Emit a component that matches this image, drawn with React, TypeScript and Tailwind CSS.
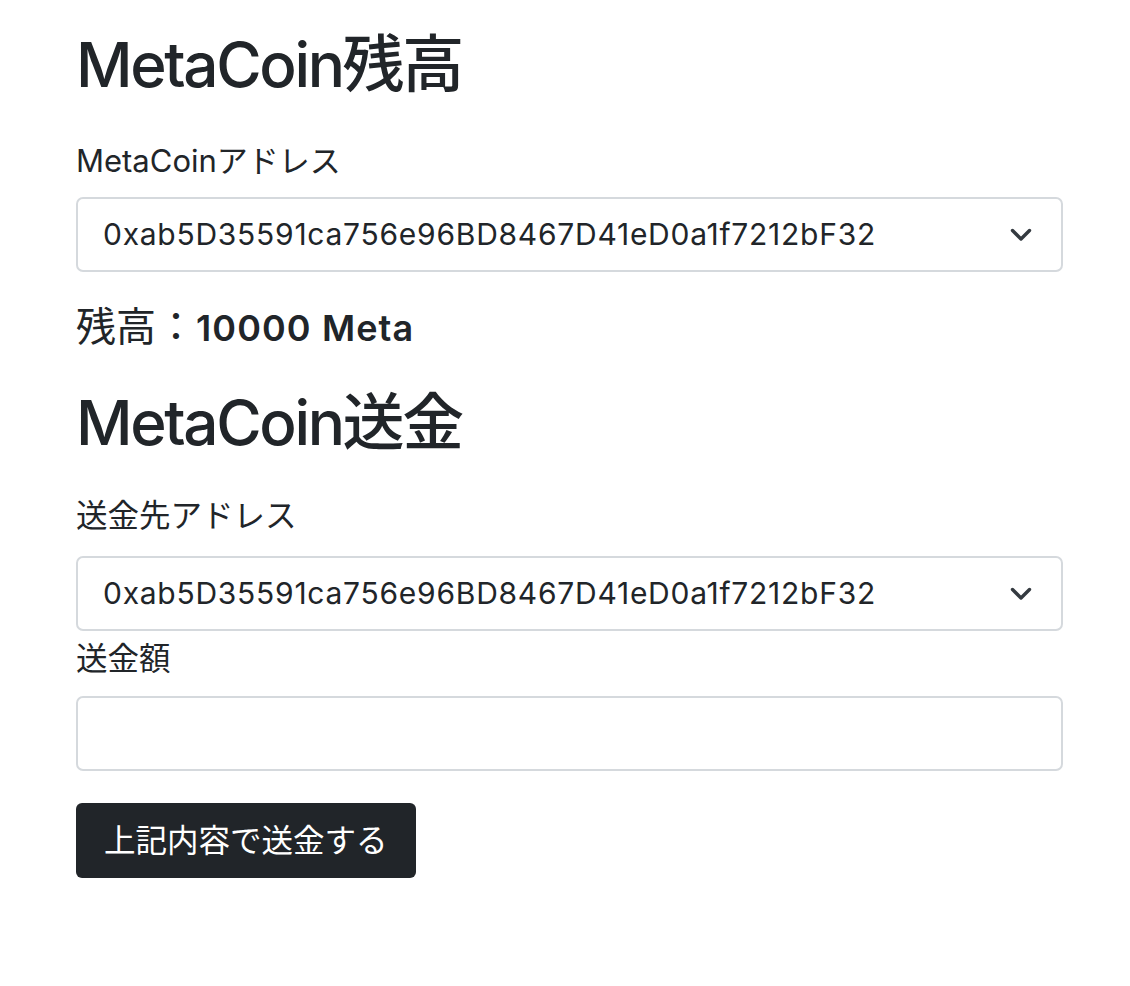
import { useState } from 'react'

const ADDRESS = '0xab5D35591ca756e96BD8467D41eD0a1f7212bF32'

function Chevron() {
  return (
    <svg width="22" height="14" viewBox="0 0 22 14" fill="none">
      <polyline
        points="2.5,2.5 11,11 19.5,2.5"
        stroke="#343a40"
        strokeWidth="3.4"
        strokeLinecap="round"
        strokeLinejoin="round"
      />
    </svg>
  )
}

function AddressSelect({ value }: { value: string }) {
  return (
    <div className="flex h-[75px] w-full items-center justify-between rounded-[7px] border-2 border-[#d5d9dd] bg-white pl-[25px] pr-[29px]">
      <span className="text-[30px] leading-[45px] tracking-[0.74px] text-[#212529]">{value}</span>
      <Chevron />
    </div>
  )
}

export default function App() {
  const [amount, setAmount] = useState('')

  return (
    <div
      className="min-h-[986px] w-full bg-white text-[#212529]"
      style={{ fontFamily: 'Inter, "Noto Sans CJK JP", sans-serif' }}
    >
      <div className="ml-[76px] flex w-[987px] flex-col">
        <h2 className="mt-[28px] text-[62px] font-medium leading-[74px] tracking-[-0.038em]">
          MetaCoin残高
        </h2>

        <label className="mt-[36px] text-[31px] leading-[45px]">MetaCoinアドレス</label>
        <div className="mt-[14px]">
          <AddressSelect value={ADDRESS} />
        </div>

        <div className="mt-[31px] text-[40px] leading-[48px]">
          <span className="leading-[40px]">残高：</span>
          <span className="text-[36px] font-semibold leading-[40px] tracking-[1.1px]">10000 Meta</span>
        </div>

        <h2 className="mt-[35px] text-[62px] font-medium leading-[74px] tracking-[-0.038em]">
          MetaCoin送金
        </h2>

        <label className="mt-[33px] text-[31.5px] leading-[45px]">送金先アドレス</label>
        <div className="mt-[18px]">
          <AddressSelect value={ADDRESS} />
        </div>

        <label className="mt-[5px] text-[31.5px] leading-[45px]">送金額</label>
        <input
          value={amount}
          onChange={(e) => setAmount(e.target.value)}
          className="mt-[15px] h-[75px] w-full rounded-[7px] border-2 border-[#d5d9dd] bg-white px-[25px] text-[30px] outline-none"
        />

        <div className="mt-[32px]">
          <button
            type="button"
            className="h-[75px] rounded-[6px] bg-[#212529] px-[28px] text-[31.5px] leading-[47px] text-white"
          >
            上記内容で送金する
          </button>
        </div>
      </div>
    </div>
  )
}
